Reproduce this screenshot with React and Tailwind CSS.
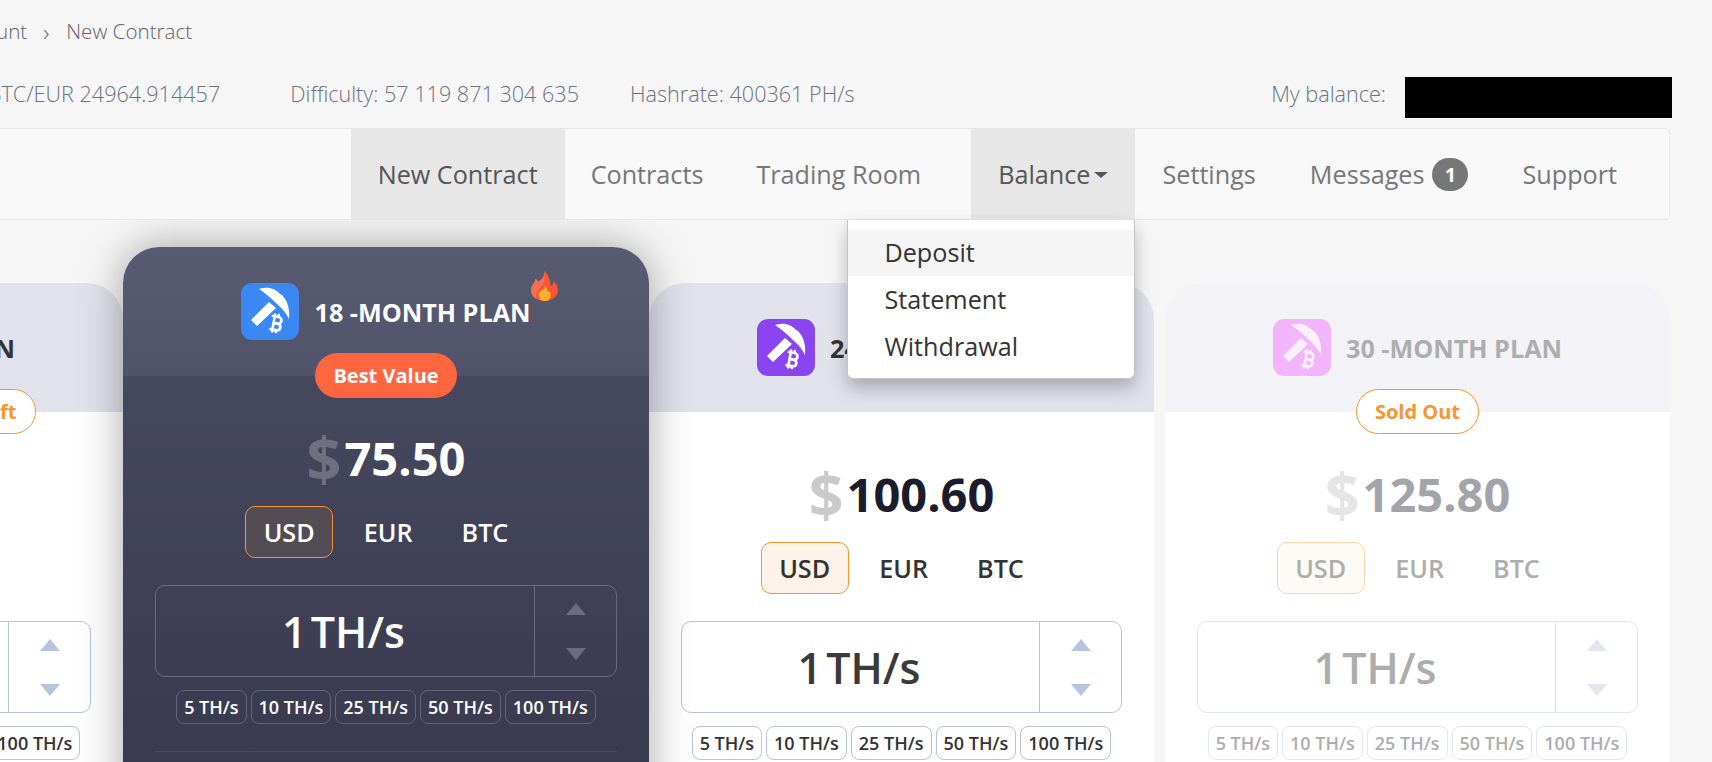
import React from "react";

const themes = {
  light: {
    header: "bg-[#e2e2ec]",
    body: "bg-white",
    title: "text-[#333333]",
    price: "text-[#1a1b2c]",
    dollar: "text-[#cacaca]",
    activeTab: "border-[#f9952f] bg-[#fdf3ea]",
    tab: "text-[#333333]",
    box: "border-[#b6c4dc]",
    arrowUp: "border-b-[#b6c4dc]",
    arrowDown: "border-t-[#b6c4dc]",
    amount: "text-[#3a3a3a]",
    chip: "border-[#b6c4dc] text-[#333333]",
    rule: "bg-[#e6e9f0]",
    pick: "#ffffff",
  },
  dark: {
    header: "bg-gradient-to-b from-[#585b71] to-[#50536a]",
    body: "bg-gradient-to-b from-[#46485e] to-[#343448]",
    title: "text-white",
    price: "text-white",
    dollar: "text-[#6f7181]",
    activeTab: "border-[#f59331] bg-[#544c55]",
    tab: "text-white",
    box: "border-[#696b7c]",
    arrowUp: "border-b-[#6b6d7e]",
    arrowDown: "border-t-[#6b6d7e]",
    amount: "text-white",
    chip: "border-[#62647a] text-white",
    rule: "bg-[#4b4c60]",
    pick: "#ffffff",
  },
  faded: {
    header: "bg-[#f3f3f7]",
    body: "bg-white",
    title: "text-[#adadad]",
    price: "text-[#a3a4a9]",
    dollar: "text-[#e5e5e5]",
    activeTab: "border-[#fcd5a8] bg-[#fefbf7]",
    tab: "text-[#adadad]",
    box: "border-[#e1e6f0]",
    arrowUp: "border-b-[#e1e6f0]",
    arrowDown: "border-t-[#e1e6f0]",
    amount: "text-[#adadad]",
    chip: "border-[#e1e6f0] text-[#adadad]",
    rule: "bg-[#f0f1f5]",
    pick: "#fdeffe",
  },
};

function PickIcon({ className, color }) {
  return (
    <svg viewBox="0 0 58 57" className={`h-[57px] w-[58px] flex-none rounded-[11px] ${className}`}>
      <path d="M18 6 C27 3 35 6 39 11 L41 12 C47 18 49 27 48 36 C45 30 41 25 36 21 C30 15 24 10 18 6 Z" fill={color} />
      <path d="M10 37 L28 19 L35 25 L16 43 Z" fill={color} />
      <g transform="translate(24 29) scale(0.95)" fill="none" stroke={color} strokeWidth="2.8" strokeLinecap="round" strokeLinejoin="round">
        <path d="M11.767 19.089c4.924.868 6.14-6.025 1.216-6.894m-1.216 6.894L5.86 18.047m5.908 1.042-.347 1.97m1.563-8.864c4.924.869 6.14-6.025 1.215-6.893m-1.215 6.893-3.94-.694m5.155-6.2L8.29 4.26m5.908 1.042.348-1.97M7.48 20.364l3.126-17.727" />
      </g>
    </svg>
  );
}

function Flame() {
  return (
    <svg viewBox="0 0 25 30" preserveAspectRatio="none" className="absolute right-[-27px] top-[-25px] h-[30px] w-[27px]">
      <path d="M12 0 C13 5 10 8 7 11 C6 9 5 8 4 8 C4 12 0 14 0 19 C0 26 6 30 12.5 30 C19 30 25 26 25 19 C25 15 23 12 21 10 C21 12 20 14 18 15 C18 9 16 3 12 0 Z" fill="#fb5533" />
      <path d="M12 1 C13 5 10 8 7 11 C6 9 5 8 4 8 C4 12 0 14 0 19 C0 23 2 26 5 28 C3 20 10 17 12 11 C13 8 13 4 12 1 Z" fill="#f0714f" />
      <path d="M13 15 C13 18 10 19 8 21 C6 23 7 30 13 30 C18 30 19 25 18 22 C17 20 16 20 15.5 21 C15 18 15 16 13 15 Z" fill="#fbb02d" />
    </svg>
  );
}

function PlanCard({ plan }) {
  const t = themes[plan.theme];
  return (
    <div className={`flex-none ${plan.className}`}>
      <div className={`relative h-[129px] rounded-t-[36px] pt-[36px] ${t.header}`}>
        <div className="flex items-center justify-center gap-[15px]">
          <PickIcon className={plan.iconBg} color={t.pick} />
          <div className={`relative text-[25.2px] font-bold leading-[32px] whitespace-nowrap ${t.title}`}>
            {plan.title}
            {plan.hot && <Flame />}
          </div>
        </div>
      </div>
      <div className={`relative flex h-[560px] flex-col items-center px-[32px] ${t.body}`}>
        {plan.badge && (
          <div className={`absolute top-[-23px] flex h-[45px] items-center rounded-full px-[18px] text-[20px] font-bold whitespace-nowrap ${plan.badgeClass}`}>
            {plan.badge}
          </div>
        )}
        <div className="mt-[42px] flex h-[76px] items-baseline gap-[3px]">
          <span className={`translate-y-[5px] text-[61px] font-bold leading-[70px] ${t.dollar}`}>$</span>
          <span className={`text-[47px] font-bold leading-[70px] ${t.price}`}>{plan.price}</span>
        </div>
        <div className="mt-[12px] flex h-[52px] gap-[12px]">
          {["USD", "EUR", "BTC"].map((c, i) => (
            <div
              key={c}
              className={`flex items-center rounded-[10px] border px-[17.5px] pt-px text-[25.2px] font-semibold ${t.tab} ${i === 0 ? t.activeTab : "border-transparent"}`}
            >
              {c}
            </div>
          ))}
        </div>
        <div className={`mt-[27px] flex h-[92px] w-full rounded-[10px] border ${t.box}`}>
          <div className={`flex flex-1 items-center justify-center pr-[3px] text-[43px] font-semibold leading-none ${t.amount}`}>
            <span className="mr-[4px]">1</span>TH/s
          </div>
          <div className={`flex w-[82px] flex-col items-center justify-center gap-[33px] border-l ${t.box}`}>
            <div className={`h-0 w-0 border-x-[10px] border-b-[12px] border-x-transparent ${t.arrowUp}`} />
            <div className={`h-0 w-0 border-x-[10px] border-t-[12px] border-x-transparent ${t.arrowDown}`} />
          </div>
        </div>
        <div className="mt-[13px] flex gap-[4px]">
          {["5 TH/s", "10 TH/s", "25 TH/s", "50 TH/s", "100 TH/s"].map((c) => (
            <div key={c} className={`flex h-[34px] items-center rounded-[8px] border px-[7px] text-[18px] font-semibold whitespace-nowrap ${t.chip}`}>
              {c}
            </div>
          ))}
        </div>
        <div className={`mt-[27px] h-px w-full ${t.rule}`} />
      </div>
    </div>
  );
}

const plans = [
  {
    title: "12 -MONTH PLAN",
    theme: "light",
    price: "50.30",
    iconBg: "bg-[#22b573]",
    className: "w-[505px]",
    badge: "Only a few contracts left",
    badgeClass: "w-[330px] justify-end border border-[#f9952f] bg-white text-[#f9952f]",
  },
  {
    title: "18 -MONTH PLAN",
    theme: "dark",
    price: "75.50",
    iconBg: "bg-[#3b88f5]",
    hot: true,
    className: "relative z-10 -mt-[36px] w-[526px] rounded-t-[36px] shadow-[0_0_44px_rgba(0,0,0,0.35)]",
    badge: "Best Value",
    badgeClass: "bg-[#ff6640] text-white",
  },
  {
    title: "24 -MONTH PLAN",
    theme: "light",
    price: "100.60",
    iconBg: "bg-[#8b45f0]",
    className: "w-[505px]",
  },
  {
    title: "30 -MONTH PLAN",
    theme: "faded",
    price: "125.80",
    iconBg: "bg-[#f2b5fb]",
    className: "ml-[11px] w-[505px]",
    badge: "Sold Out",
    badgeClass: "border border-[#f9952f] bg-white text-[#f9952f]",
  },
];

function NavItem({ active, className = "", children }) {
  return (
    <div className={`relative flex h-full items-center px-[27px] pt-px whitespace-nowrap ${active ? "bg-[#e7e7e7] text-[#555555]" : "text-[#777777]"} ${className}`}>
      {children}
    </div>
  );
}

export default function App() {
  return (
    <div className="h-[762px] w-full overflow-hidden bg-[#f6f6f6] pr-[42px] font-['Open_Sans',sans-serif]">
      {/* Breadcrumb */}
      <div className="-ml-[48px] flex h-[63px] items-center gap-[16px] text-[20.6px] font-light text-[#5f6368]">
        <span>Account</span>
        <span className="w-[7px] text-[24px] leading-none">›</span>
        <span>New Contract</span>
      </div>

      {/* Stats */}
      <div className="mt-[14px] flex h-[41px] items-center justify-between whitespace-nowrap text-[21.6px] font-light text-[#6b7280]">
        <div className="-ml-[12px] flex items-center pb-[7px]">
          <span>BTC/EUR 24964.914457</span>
          <span className="ml-[70px]">Difficulty: 57 119 871 304 635</span>
          <span className="ml-[51px]">Hashrate: 400361 PH/s</span>
        </div>
        <div className="-mr-[2px] flex items-center gap-[19px]">
          <span className="pb-[7px]">My balance:</span>
          <div className="h-[41px] w-[267px] bg-black" />
        </div>
      </div>

      {/* Nav */}
      <div className="relative z-20 -ml-[4px] mt-[10px] flex h-[92px] justify-end rounded-r-[5px] border border-[#e7e7e7] bg-[#f8f8f8] text-[25.2px]">
        <NavItem active>New Contract</NavItem>
        <NavItem className="-ml-[1px]">Contracts</NavItem>
        <NavItem className="mr-[23px] -ml-[1px]">Trading Room</NavItem>
        <NavItem active>
          Balance
          <span className="ml-[4px] h-0 w-0 border-x-[7px] border-t-[6px] border-x-transparent border-t-[#555555]" />
          <div className="absolute right-0 top-full mt-px h-[159px] w-[288px] rounded-b-[6px] border border-t-0 border-[#c4c4c4] bg-white py-[10px] text-[#333333] shadow-[0_9px_18px_rgba(0,0,0,0.25)]">
            <div className="flex h-[46px] items-center bg-[#f5f5f5] pl-[36px]">Deposit</div>
            <div className="flex h-[47px] items-center pl-[36px]">Statement</div>
            <div className="flex h-[47px] items-center pl-[36px]">Withdrawal</div>
          </div>
        </NavItem>
        <NavItem>Settings</NavItem>
        <NavItem>
          Messages
          <span className="ml-[8px] flex h-[33px] w-[36px] items-center justify-center rounded-full bg-[#777777] text-[20px] font-bold text-white">1</span>
        </NavItem>
        <NavItem className="mr-[25px]">Support</NavItem>
      </div>

      {/* Plans */}
      <div className="mt-[63px] flex items-start justify-end">
        {plans.map((plan) => (
          <PlanCard key={plan.title} plan={plan} />
        ))}
      </div>
    </div>
  );
}
